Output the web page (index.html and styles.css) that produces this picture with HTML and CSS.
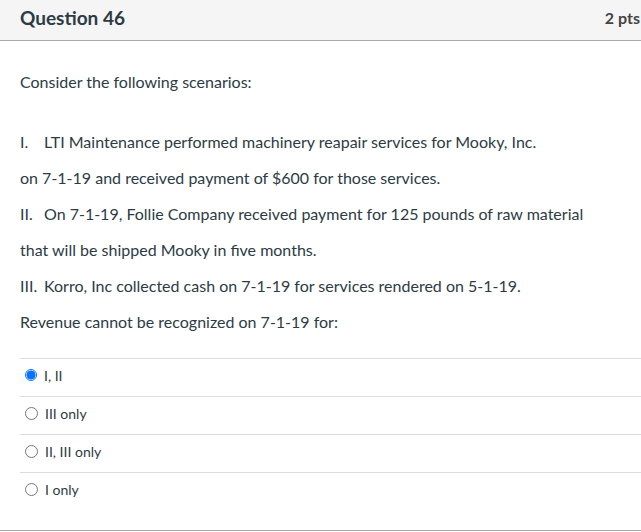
FILE: index.html
```html
<!DOCTYPE html>
<html>
<head>
<meta charset="utf-8">
<link rel="stylesheet" href="styles.css">
</head>
<body>
<div class="question">
  <div class="header">
    <h2 class="title">Question 46</h2>
    <span class="pts">2 pts</span>
  </div>
  <div class="content">
    <p class="intro">Consider the following scenarios:</p>
    <p class="line"><span class="num">I.</span>LTI Maintenance performed machinery reapair services for Mooky, Inc.</p>
    <p class="line">on 7-1-19 and received payment of $600 for those services.</p>
    <p class="line"><span class="num">II.</span>On 7-1-19, Follie Company received payment for 125 pounds of raw material</p>
    <p class="line">that will be shipped Mooky in five months.</p>
    <p class="line"><span class="num">III.</span>Korro, Inc collected cash on 7-1-19 for services rendered on 5-1-19.</p>
    <p class="line">Revenue cannot be recognized on 7-1-19 for:</p>
  </div>
  <div class="answers">
    <label class="answer"><span class="radio checked"></span><span class="atext">I, II</span></label>
    <label class="answer"><span class="radio"></span><span class="atext">III only</span></label>
    <label class="answer"><span class="radio"></span><span class="atext">II, III only</span></label>
    <label class="answer"><span class="radio"></span><span class="atext">I only</span></label>
  </div>
</div>
</body>
</html>
```
FILE: styles.css
```css
html, body {
  margin: 0;
  padding: 0;
  background: #fff;
}
body {
  font-family: Lato, "Open Sans", sans-serif;
  color: #2d3b45;
  width: 641px;
  height: 532px;
  overflow: hidden;
}
.question {
  border-bottom: 1px solid #a8a8a8;
  height: 531px;
  box-sizing: border-box;
}
.header {
  background: #f5f5f5;
  height: 41px;
  box-sizing: border-box;
  border-bottom: 1px solid #a8a8a8;
  display: flex;
  justify-content: space-between;
  align-items: center;
  padding: 0 1px 6px 20px;
}
.title {
  margin: 0;
  font-size: 19px;
  font-weight: 700;
  color: #2d3b45;
}
.pts {
  font-size: 16px;
  font-weight: 700;
  color: #444;
}
.content {
  padding: 23px 20px 0 20px;
}
.content p {
  margin: 0;
  font-size: 16px;
  line-height: 36px;
}
.content .num {
  display: inline-block;
  width: 24px;
}
.content .intro {
  margin-bottom: 24px;
}
.answers {
  margin: 18px 0 0 20px;
}
.answer {
  display: flex;
  align-items: center;
  height: 38px;
  border-top: 1px solid #dcdcdc;
  box-sizing: border-box;
  padding-left: 5px;
  padding-bottom: 5px;
  font-size: 14px;
  color: #2d3b45;
}
.radio {
  width: 11px;
  height: 11px;
  border: 1px solid #767676;
  border-radius: 50%;
  margin-right: 7px;
  box-sizing: content-box;
  background: #fff;
}
.radio.checked {
  border: 1.5px solid #0b74ff;
  background: radial-gradient(circle, #0b74ff 0 4.2px, #fff 4.8px);
  width: 10px;
  height: 10px;
}
```
